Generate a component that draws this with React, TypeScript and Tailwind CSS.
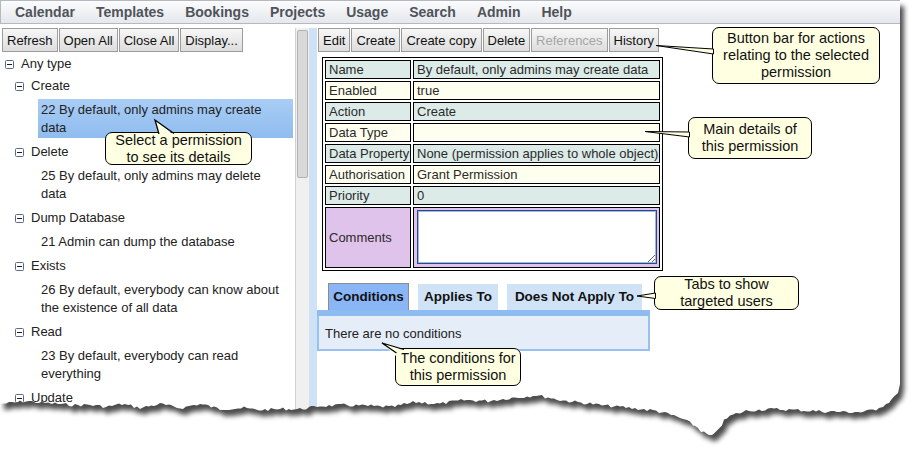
import React from "react";

const MENU = ["Calendar", "Templates", "Bookings", "Projects", "Usage", "Search", "Admin", "Help"];

type Node =
  | { kind: "head"; level: 1 | 2; text: string }
  | { kind: "item"; lines: string[]; selected?: boolean };

const TREE: Node[] = [
  { kind: "head", level: 1, text: "Any type" },
  { kind: "head", level: 2, text: "Create" },
  { kind: "item", lines: ["22 By default, only admins may create", "data"], selected: true },
  { kind: "head", level: 2, text: "Delete" },
  { kind: "item", lines: ["25 By default, only admins may delete", "data"] },
  { kind: "head", level: 2, text: "Dump Database" },
  { kind: "item", lines: ["21 Admin can dump the database"] },
  { kind: "head", level: 2, text: "Exists" },
  { kind: "item", lines: ["26 By default, everybody can know about", "the existence of all data"] },
  { kind: "head", level: 2, text: "Read" },
  { kind: "item", lines: ["23 By default, everybody can read", "everything"] },
  { kind: "head", level: 2, text: "Update" },
  { kind: "item", lines: ["24 By default, only admins may update", "data"] },
];

const ROWS: { label: string; value: string; tone: "teal" | "cream" }[] = [
  { label: "Name", value: "By default, only admins may create data", tone: "teal" },
  { label: "Enabled", value: "true", tone: "cream" },
  { label: "Action", value: "Create", tone: "teal" },
  { label: "Data Type", value: "", tone: "cream" },
  { label: "Data Property", value: "None (permission applies to whole object)", tone: "teal" },
  { label: "Authorisation", value: "Grant Permission", tone: "cream" },
  { label: "Priority", value: "0", tone: "teal" },
];

// rough outline of the torn bottom edge, left to right
const EDGE: [number, number][] = [
  [0, 404], [12, 403], [26, 401], [42, 403], [58, 404], [72, 405], [90, 405], [106, 407],
  [122, 404], [140, 408], [160, 404], [180, 408], [200, 404], [220, 409], [244, 408], [256, 410],
  [280, 409], [300, 409], [320, 406], [344, 405], [368, 406], [392, 407], [416, 402], [440, 404],
  [464, 400], [488, 401], [512, 398], [536, 395], [560, 400], [584, 403], [608, 406], [632, 408],
  [656, 411], [668, 414], [680, 418], [690, 423], [698, 428], [704, 433], [709, 436], [714, 435],
  [719, 428], [724, 421], [730, 416], [746, 411], [768, 409], [792, 410], [816, 411], [840, 412],
  [864, 412], [876, 409], [886, 404], [894, 398], [898, 392], [900, 384],
];

// add a small deterministic ragged jitter between the outline points
function ragged(points: [number, number][]): [number, number][] {
  let seed = 7;
  const rnd = () => {
    seed = (seed * 9301 + 49297) % 233280;
    return seed / 233280;
  };
  const out: [number, number][] = [];
  for (let i = 0; i < points.length - 1; i++) {
    const [x0, y0] = points[i];
    const [x1, y1] = points[i + 1];
    const steps = Math.max(1, Math.round((x1 - x0) / 3));
    for (let s = 0; s < steps; s++) {
      const t = s / steps;
      const x = x0 + (x1 - x0) * t;
      const y = y0 + (y1 - y0) * t + (i === 0 && s === 0 ? 0 : (rnd() - 0.5) * 3.2);
      out.push([Math.round(x), Math.round(y * 2) / 2]);
    }
  }
  out.push(points[points.length - 1]);
  return out;
}

const EDGE_FINE = ragged(EDGE);
const paperPath =
  "M0 0 L900 0 " + [...EDGE_FINE].reverse().map(([x, y]) => `L${x} ${y}`).join(" ") + " Z";
const outsidePath = "M0 0 H912 V453 H0 Z " + paperPath;

function Btn({ children, disabled }: { children: React.ReactNode; disabled?: boolean }) {
  return (
    <button
      className={`h-[24px] px-[4px] border border-[#9c9c9c] bg-linear-to-b from-[#f7f7f7] to-[#dddddd] text-[13px] leading-none whitespace-nowrap ${
        disabled ? "text-[#a5a5a5]" : "text-[#111]"
      }`}
    >
      {children}
    </button>
  );
}

const MinusBox = () => (
  <svg width="9" height="9" viewBox="0 0 9 9" className="shrink-0">
    <rect x="0.5" y="0.5" width="8" height="8" rx="1" fill="#fff" stroke="#56698f" />
    <path d="M2 4.5h5" stroke="#1d1d1d" />
  </svg>
);

function Callout({ className, lines }: { className: string; lines: string[] }) {
  return (
    <div
      className={`absolute flex flex-col items-center justify-center rounded-[7px] border-[1.5px] border-black bg-[#ffffe1] text-[14.5px] leading-[17px] text-[#111] ${className}`}
    >
      {lines.map((l) => (
        <div key={l} className="whitespace-nowrap">
          {l}
        </div>
      ))}
    </div>
  );
}

export default function App() {
  return (
    <div className="relative w-[912px] h-[453px] overflow-hidden bg-white font-['Liberation_Sans',Arial,sans-serif] text-[13px] text-[#222]">
      <div className="flex flex-col w-[900px] h-[453px] overflow-hidden">
        {/* Menu bar */}
        <div className="flex items-center gap-[21px] h-[24px] shrink-0 pl-[14px] border border-r-0 border-[#b4b9c1] bg-linear-to-b from-[#fcfcfd] to-[#e4e7ec] text-[14px] font-bold text-[#4f535a]">
          {MENU.map((m) => (
            <span key={m}>{m}</span>
          ))}
        </div>

        <div className="flex flex-1 min-h-0 pt-[4px]">
          {/* Left: permission tree */}
          <div className="w-[295px] shrink-0 flex flex-col">
            <div className="flex gap-[1px] pl-[2px]">
              <Btn>Refresh</Btn>
              <Btn>Open All</Btn>
              <Btn>Close All</Btn>
              <Btn>Display...</Btn>
            </div>
            <div className="pt-[1px]">
              {TREE.map((n, i) =>
                n.kind === "head" ? (
                  <div
                    key={i}
                    className={`flex items-center gap-[7px] h-[22px] ${n.level === 1 ? "pl-[5px]" : "pl-[15px]"}`}
                  >
                    <MinusBox />
                    <span>{n.text}</span>
                  </div>
                ) : (
                  <div key={i} className="pl-[38px] pr-[2px] pt-[2px] pb-[3px]">
                    <div
                      className={`pl-[3px] pt-[2px] pb-[1px] leading-[18px] ${
                        n.selected ? "bg-linear-to-b from-[#a9cdf5] to-[#8fbcef]" : ""
                      }`}
                    >
                      {n.lines.map((l) => (
                        <div key={l} className="whitespace-nowrap">
                          {l}
                        </div>
                      ))}
                    </div>
                  </div>
                )
              )}
            </div>
          </div>

          {/* Scrollbar */}
          <div className="w-[14px] shrink-0 border-l border-[#d2d2d2] bg-[#f0f0f0] pt-[2px] pl-[1px]">
            <div className="w-[11px] h-[148px] rounded-[2px] border border-[#b3b3b3] bg-[#d9d9d9]" />
          </div>
          {/* Splitter */}
          <div className="w-[8px] shrink-0 bg-[#cfe2f5]" />

          {/* Right: permission details */}
          <div className="flex-1 flex flex-col">
            <div className="flex gap-[1px] pl-[1px]">
              <Btn>Edit</Btn>
              <Btn>Create</Btn>
              <Btn>Create copy</Btn>
              <Btn>Delete</Btn>
              <Btn disabled>References</Btn>
              <Btn>History</Btn>
            </div>

            <table className="mt-[5px] ml-[5px] w-[341px] table-fixed border-separate border-spacing-[2px] border border-black text-[#2a2a2a]">
              <tbody>
                {ROWS.map((r) => {
                  const bg = r.tone === "teal" ? "bg-[#dcebe7]" : "bg-[#fffff0]";
                  return (
                    <tr key={r.label}>
                      <td className={`w-[86px] h-[19px] p-0 pl-[3px] border border-black leading-[17px] whitespace-nowrap ${bg}`}>
                        {r.label}
                      </td>
                      <td className={`w-[247px] h-[19px] p-0 pl-[3px] border border-black leading-[17px] whitespace-nowrap ${bg}`}>
                        {r.value}
                      </td>
                    </tr>
                  );
                })}
                <tr>
                  <td className="h-[61px] p-0 pl-[3px] border border-black bg-[#e0c3ea] align-middle">Comments</td>
                  <td className="h-[61px] p-0 pl-[3px] pt-[2px] border border-black bg-[#e0c3ea] align-top">
                    <textarea
                      className="block w-[240px] h-[54px] bg-white border border-[#2b4a8b] shadow-[inset_0_0_0_1px_#9db6e2] outline-none"
                      defaultValue=""
                    />
                  </td>
                </tr>
              </tbody>
            </table>

            {/* Tabs */}
            <div className="mt-[12px] flex items-end gap-[9px] pl-[11px] h-[27px] text-[13.5px] font-bold text-[#111]">
              <div className="h-[27px] w-[81px] flex items-center justify-center border border-b-0 border-[#8c8c8c] bg-[#8ab5f7]">
                Conditions
              </div>
              <div className="h-[26px] w-[80px] flex items-center justify-center bg-[#cfe2f6]">Applies To</div>
              <div className="h-[26px] w-[135px] flex items-center justify-center bg-[#cfe2f6] whitespace-nowrap">
                Does Not Apply To
              </div>
            </div>
            <div className="w-[333px] h-[6px] bg-[#8fbcf0]" />
            <div className="w-[333px] h-[35px] border-2 border-t-0 border-[#98c1f1] bg-[#e5edf8] pl-[6px] pt-[10px] leading-[16px]">
              There are no conditions
            </div>
          </div>
        </div>
      </div>

      {/* Torn edge and drop shadow */}
      <svg className="absolute inset-0 pointer-events-none" width="912" height="453">
        <defs>
          <filter id="soft" x="-5%" y="-5%" width="110%" height="110%">
            <feGaussianBlur stdDeviation="2.4" />
          </filter>
          <clipPath id="outside">
            <path clipRule="evenodd" d={outsidePath} />
          </clipPath>
        </defs>
        <g clipPath="url(#outside)">
          <rect width="912" height="453" fill="#fff" />
          <path d={paperPath} transform="translate(4 6)" fill="#000" fillOpacity="0.7" filter="url(#soft)" />
        </g>
      </svg>

      {/* Callouts */}
      <Callout className="left-[712px] top-[27px] w-[168px] h-[57px]" lines={["Button bar for actions", "relating to the selected", "permission"]} />
      <Callout className="left-[688px] top-[117px] w-[124px] h-[42px]" lines={["Main details of", "this permission"]} />
      <Callout className="left-[654px] top-[276px] w-[145px] h-[34px]" lines={["Tabs to show", "targeted users"]} />
      <Callout className="left-[105px] top-[132px] w-[147px] h-[33px]" lines={["Select a permission", "to see its details"]} />
      <Callout className="left-[395px] top-[348px] w-[126px] h-[38px]" lines={["The conditions for", "this permission"]} />

      {/* Callout pointers */}
      <svg className="absolute inset-0 pointer-events-none" width="912" height="453">
        <polygon points="656,45.5 713.5,49 713.5,54" fill="#ffffe1" stroke="#000" strokeWidth="1" />
        <polygon points="645,131.5 689.5,132 689.5,137" fill="#ffffe1" stroke="#000" strokeWidth="1" />
        <polygon points="637,296 655.5,293 655.5,298.5" fill="#ffffe1" stroke="#000" strokeWidth="1" />
        <polygon points="155,120 159,136 175,136" fill="#ffffe1" />
        <polyline points="159,134 155,120 174,133.5" fill="none" stroke="#000" strokeWidth="1.3" />
        <polygon points="382,343 405,351 397,357" fill="#ffffe1" />
        <polyline points="396.5,353 382,343 404,349.5" fill="none" stroke="#000" strokeWidth="1.3" />
      </svg>
    </div>
  );
}
